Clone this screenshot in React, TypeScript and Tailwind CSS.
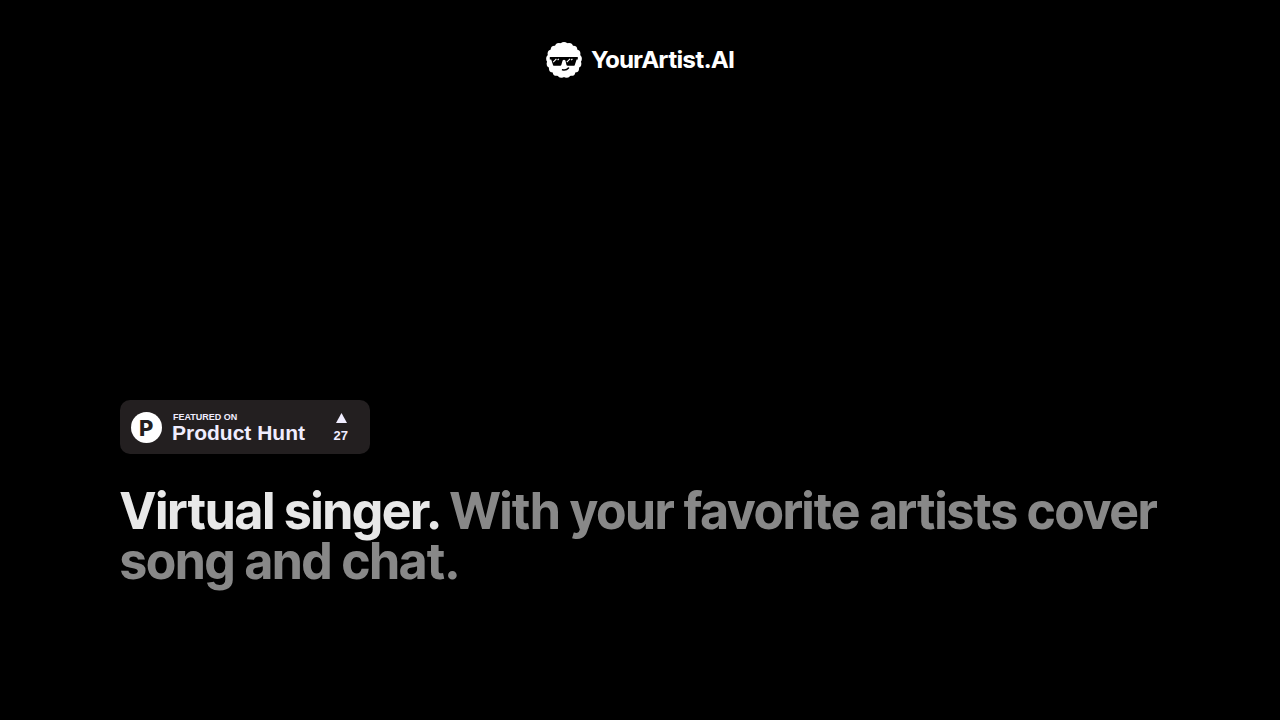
const curls = Array.from({ length: 17 }, (_, i) => {
  const angle = (i / 17) * Math.PI * 2 - Math.PI / 2;
  return { x: 18 + Math.cos(angle) * 14, y: 18 + Math.sin(angle) * 14 };
});

function Logo() {
  return (
    <svg viewBox="0 0 36 36" className="size-9" aria-hidden="true">
      <circle cx="18" cy="18" r="16.8" fill="#fff" />
      {curls.map((curl, i) => (
        <circle key={i} cx={curl.x} cy={curl.y} r="3.9" fill="#fff" />
      ))}
      <path
        fill="#000"
        d="M3.8 15H31.8V17.6H30.6L28.7 23.2Q28.4 23.8 27.6 23.8H21.5Q20.7 23.8 20.5 23L19.4 18.4Q18 17 16.6 18.4L15.3 23Q15.1 23.8 14.3 23.8H8.2Q7.4 23.8 7.1 23.2L5.2 17.6H3.8Z"
      />
      <path stroke="#fff" strokeWidth="1.1" d="M7.2 20.2L10.4 16.8M11.6 18.2L12.8 16.8M20.8 20.2L24 16.8M25.2 18.2L26.4 16.8" />
      <path fill="none" stroke="#000" strokeWidth="1.6" strokeLinecap="round" d="M16.6 27.8Q20.3 28.6 22.5 26" />
    </svg>
  );
}

function ProductHuntBadge() {
  return (
    <a
      href="#product-hunt"
      className="flex h-[54px] w-[250px] items-center rounded-[10px] bg-[#231f20] pt-px pr-[22px] pl-[11px] font-['Liberation_Sans',sans-serif] font-bold text-[#f0edff]"
    >
      <svg viewBox="0 0 31 31" className="size-[31px] shrink-0" aria-hidden="true">
        <circle cx="15.5" cy="15.5" r="15.5" fill="#fff" />
        <text x="8" y="24" fontFamily="Inter, sans-serif" fontSize="22" fontWeight="800" fill="#231f20">
          P
        </text>
      </svg>
      <span className="ml-2.5 flex flex-col">
        <span className="pl-px text-[9px] leading-[10px]">FEATURED ON</span>
        <span className="text-[21px] leading-[22px]">Product Hunt</span>
      </span>
      <span className="ml-auto flex flex-col items-center gap-1 pt-[3px]">
        <svg viewBox="0 0 11 10" className="ml-px h-2.5 w-[11px]" fill="currentColor" aria-hidden="true">
          <path d="M5.5 0L11 10H0Z" />
        </svg>
        <span className="text-[13px] leading-[18px]">27</span>
      </span>
    </a>
  );
}

export default function App() {
  return (
    <div className="flex min-h-screen flex-col bg-black font-['Inter_Tight',Inter,sans-serif] text-white">
      <header className="flex justify-center pt-[42px]">
        <a href="#home" className="flex items-center gap-2.5">
          <Logo />
          <span className="text-2xl font-bold">YourArtist.AI</span>
        </a>
      </header>
      <main className="mt-auto flex flex-col items-start gap-8 px-[120px] pb-[134px]">
        <ProductHuntBadge />
        <h1 className="text-[50px] leading-[50px] font-bold text-[#888]">
          <span className="text-[#e8e8e8]">Virtual singer.</span> With your favorite artists cover song and chat.
        </h1>
      </main>
    </div>
  );
}
